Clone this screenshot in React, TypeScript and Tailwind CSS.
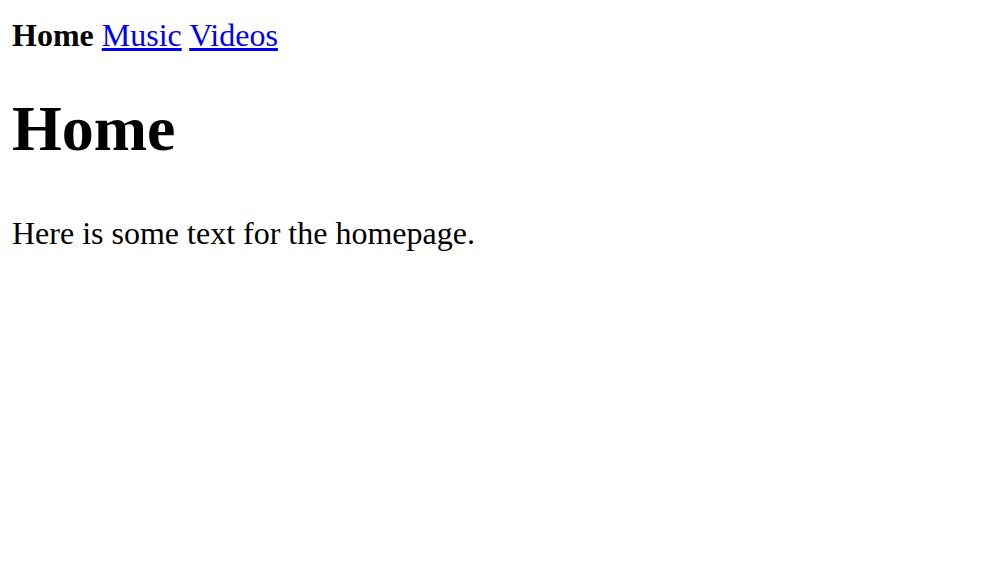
export default function App() {
  return (
    <div className="min-h-[588px] bg-white px-[12px] pt-[17px] text-black font-['Liberation_Serif','Times_New_Roman',serif]">
      <nav className="text-[32px] leading-[36px]">
        <b className="font-bold">Home</b>{' '}
        <a href="#" className="text-[#0000ee] underline">Music</a>{' '}
        <a href="#" className="text-[#0000ee] underline">Videos</a>
      </nav>
      <h1 className="mt-[40px] text-[64px] leading-[72px] font-bold">Home</h1>
      <p className="mt-[50px] text-[32px] leading-[36px]">Here is some text for the homepage.</p>
    </div>
  );
}
